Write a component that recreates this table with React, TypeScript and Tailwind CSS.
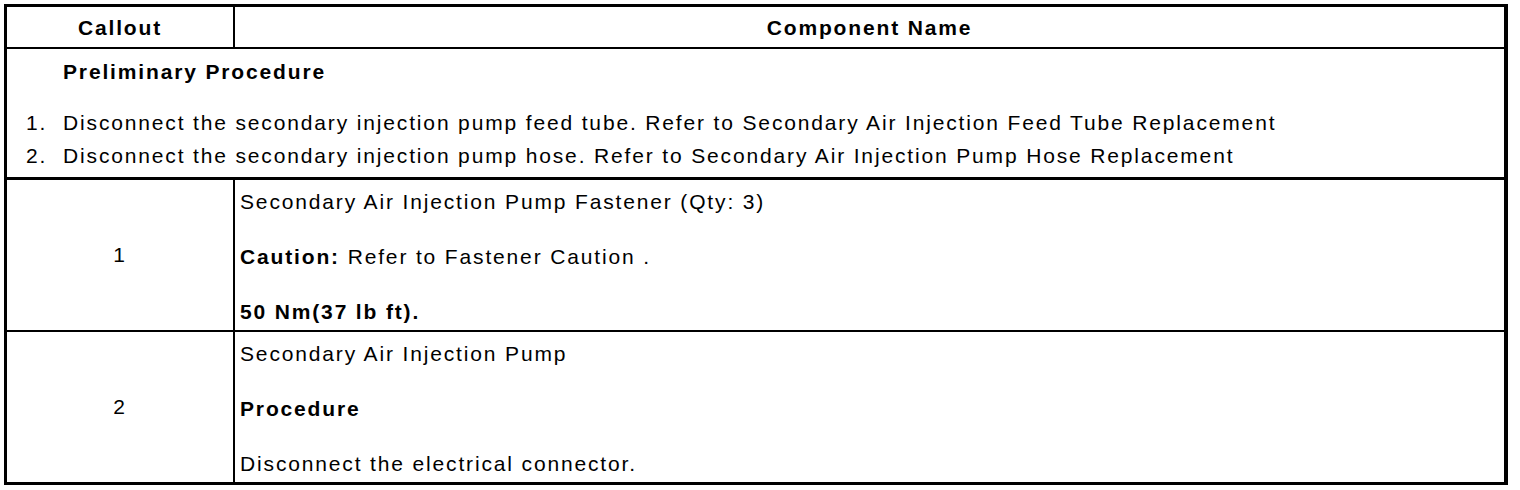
const rows = [
  {
    callout: "1",
    lines: [
      <>Secondary Air Injection Pump Fastener (Qty: 3)</>,
      <>
        <span className="font-bold">Caution:</span> Refer to Fastener Caution .
      </>,
      <span className="font-bold">50 Nm(37 lb ft).</span>,
    ],
  },
  {
    callout: "2",
    lines: [
      <>Secondary Air Injection Pump</>,
      <span className="font-bold">Procedure</span>,
      <>Disconnect the electrical connector.</>,
    ],
  },
];

const steps = [
  "Disconnect the secondary injection pump feed tube. Refer to Secondary Air Injection Feed Tube Replacement",
  "Disconnect the secondary injection pump hose. Refer to Secondary Air Injection Pump Hose Replacement",
];

export default function App() {
  return (
    <div className="min-h-screen bg-white p-[4px] font-['Liberation_Sans',Arial,sans-serif] text-[21px] tracking-[1.85px] text-black">
      <div className="w-[1504px] border-[3px] border-r-4 border-black">
        {/* header */}
        <div className="flex h-[42px] border-b-2 border-black font-bold">
          <div className="w-[228px] border-r-2 border-black pt-[10px] text-center leading-[22px]">Callout</div>
          <div className="flex-1 pt-[10px] text-center leading-[22px]">Component Name</div>
        </div>

        {/* preliminary procedure */}
        <div className="h-[131px] border-b-[3px] border-black pt-[12px]">
          <p className="pl-[56px] font-bold leading-[22px]">Preliminary Procedure</p>
          <ol className="mt-[23px]">
            {steps.map((s, i) => (
              <li key={i} className="flex leading-[33px]">
                <span className="w-[56px] pl-[19px]">{i + 1}.</span>
                <span>{s}</span>
              </li>
            ))}
          </ol>
        </div>

        {rows.map((row, i) => (
          <div
            key={row.callout}
            className={i === 0 ? "flex h-[152px] border-b-2 border-black" : "flex h-[150px]"}
          >
            <div className="flex w-[228px] items-center justify-center border-r-2 border-black">{row.callout}</div>
            <div className="flex flex-1 flex-col gap-[33px] pl-[5px] pt-[11px]">
              {row.lines.map((l, j) => (
                <p key={j} className="leading-[22px]">
                  {l}
                </p>
              ))}
            </div>
          </div>
        ))}
      </div>
    </div>
  );
}
